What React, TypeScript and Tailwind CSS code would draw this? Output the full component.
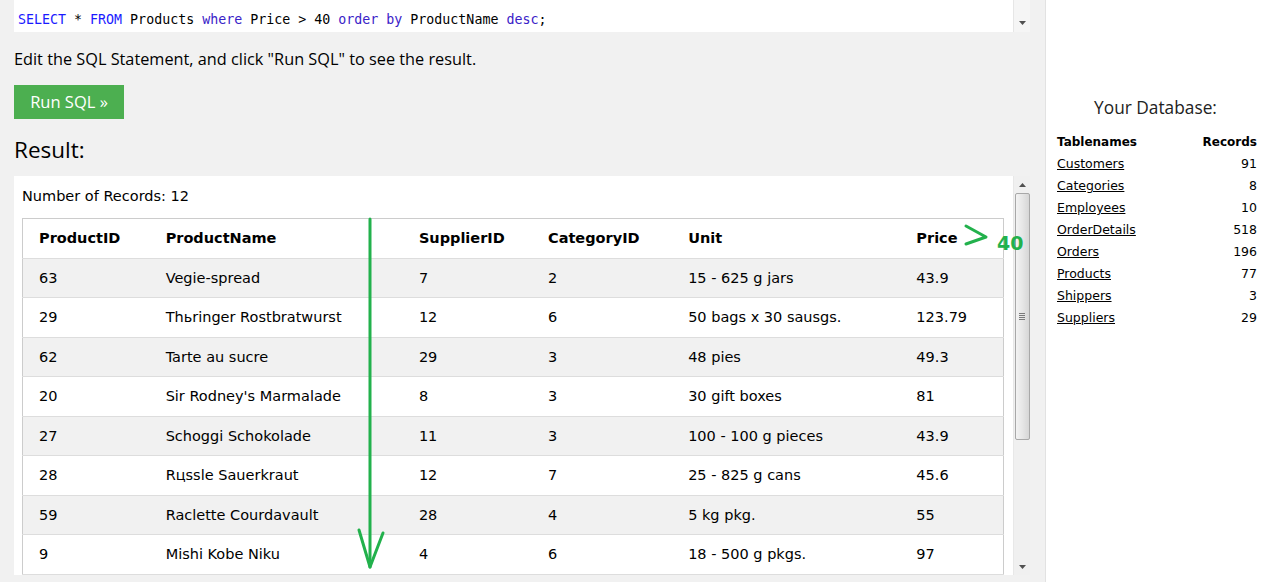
import React from "react";

const rows = [
  ["63", "Vegie-spread", "7", "2", "15 - 625 g jars", "43.9"],
  ["29", "Thьringer Rostbratwurst", "12", "6", "50 bags x 30 sausgs.", "123.79"],
  ["62", "Tarte au sucre", "29", "3", "48 pies", "49.3"],
  ["20", "Sir Rodney's Marmalade", "8", "3", "30 gift boxes", "81"],
  ["27", "Schoggi Schokolade", "11", "3", "100 - 100 g pieces", "43.9"],
  ["28", "Rцssle Sauerkraut", "12", "7", "25 - 825 g cans", "45.6"],
  ["59", "Raclette Courdavault", "28", "4", "5 kg pkg.", "55"],
  ["9", "Mishi Kobe Niku", "4", "6", "18 - 500 g pkgs.", "97"],
];

const dbTables = [
  ["Customers", "91"],
  ["Categories", "8"],
  ["Employees", "10"],
  ["OrderDetails", "518"],
  ["Orders", "196"],
  ["Products", "77"],
  ["Shippers", "3"],
  ["Suppliers", "29"],
];

const headers = ["ProductID", "ProductName", "SupplierID", "CategoryID", "Unit", "Price"];

function ArrowUp() {
  return (
    <svg width="7" height="4" viewBox="0 0 7 4">
      <path d="M3.5 0 L7 4 L0 4 Z" fill="#505050" />
    </svg>
  );
}
function ArrowDown() {
  return (
    <svg width="7" height="4" viewBox="0 0 7 4">
      <path d="M0 0 L7 0 L3.5 4 Z" fill="#505050" />
    </svg>
  );
}

export default function App() {
  return (
    <div className="relative flex h-[582px] w-[1265px] overflow-hidden bg-white text-black">
      {/* Left column */}
      <div className="flex w-[1045px] shrink-0 flex-col bg-[#f1f1f1] pl-[14px] pr-[15px]">
        {/* Code area */}
        <div className="flex h-[32px] bg-white">
          <div
            className="flex-1 pl-[4px] pt-[11px] text-[13.3px] leading-[18px] whitespace-pre"
            style={{ fontFamily: '"DejaVu Sans Mono", "Liberation Mono", monospace' }}
          >
            <span className="text-[#1a1aff]">SELECT</span>
            <span> * </span>
            <span className="text-[#1a1aff]">FROM</span>
            <span> Products </span>
            <span className="text-[#3a22c8]">where</span>
            <span> Price &gt; 40 </span>
            <span className="text-[#3a22c8]">order by</span>
            <span> ProductName </span>
            <span className="text-[#3a22c8]">desc</span>
            <span>;</span>
          </div>
          <div className="flex w-[17px] flex-col items-center justify-end border-l border-[#e6e6e6] bg-[#f5f5f5] pb-[7px]">
            <ArrowDown />
          </div>
        </div>

        <div
          className="mt-[16px] text-[16.3px] leading-[22px]"
          style={{ fontFamily: '"Open Sans", "Noto Sans", sans-serif' }}
        >
          Edit the SQL Statement, and click "Run SQL" to see the result.
        </div>

        <div className="mt-[15px]">
          <button
            className="flex h-[34px] w-[110px] items-center justify-center bg-[#4CAF50] text-[16.5px] text-white"
            style={{ fontFamily: '"Open Sans", "Noto Sans", sans-serif' }}
          >
            Run SQL »
          </button>
        </div>

        <div
          className="mt-[15px] h-[32px] text-[22.5px] leading-[32px]"
          style={{ fontFamily: '"Open Sans", "Noto Sans", sans-serif' }}
        >
          Result:
        </div>

        {/* Result panel */}
        <div className="mt-[10px] flex h-[399px] shrink-0 bg-white">
          <div
            className="flex-1 overflow-hidden pl-[8px]"
            style={{ fontFamily: '"DejaVu Sans", Verdana, sans-serif' }}
          >
            <div className="pt-[9px] text-[14.5px] leading-[22px]">Number of Records: 12</div>
            <table className="mt-[11px] w-[982px] table-fixed border-collapse border border-[#cccccc] text-[14.5px] leading-[22.5px]">
              <colgroup>
                <col className="w-[135px]" />
                <col className="w-[253px]" />
                <col className="w-[129px]" />
                <col className="w-[140px]" />
                <col className="w-[228px]" />
                <col className="w-[95px]" />
              </colgroup>
              <thead>
                <tr className="border-b border-[#dddddd] bg-white">
                  {headers.map((h, i) => (
                    <th
                      key={h}
                      className={`py-[8px] pr-[8px] text-left font-bold ${i === 0 ? "pl-[16px]" : "pl-[8px]"}`}
                    >
                      {h}
                    </th>
                  ))}
                </tr>
              </thead>
              <tbody>
                {rows.map((r, ri) => (
                  <tr
                    key={ri}
                    className={`border-b border-[#dddddd] ${ri % 2 === 0 ? "bg-[#f1f1f1]" : "bg-white"}`}
                  >
                    {r.map((c, ci) => (
                      <td
                        key={ci}
                        className={`whitespace-nowrap py-[8px] pr-[8px] ${ci === 0 ? "pl-[16px]" : "pl-[8px]"}`}
                      >
                        {c}
                      </td>
                    ))}
                  </tr>
                ))}
              </tbody>
            </table>
          </div>
          {/* Scrollbar */}
          <div className="flex w-[17px] shrink-0 flex-col items-center border-l border-[#e8e8e8] bg-[#f0f0f0]">
            <div className="flex h-[17px] items-center justify-center">
              <ArrowUp />
            </div>
            <div className="flex h-[247px] w-[15px] items-center justify-center rounded-[2px] border border-[#a8a8a8] bg-gradient-to-r from-[#f3f3f3] via-[#e6e6e6] to-[#d6d6d6]">
              <div className="flex flex-col gap-[1px]">
                <div className="h-[1px] w-[6px] bg-[#7a7a7a]" />
                <div className="h-[1px] w-[6px] bg-[#7a7a7a]" />
                <div className="h-[1px] w-[6px] bg-[#7a7a7a]" />
                <div className="h-[1px] w-[6px] bg-[#7a7a7a]" />
              </div>
            </div>
            <div className="flex-1" />
            <div className="flex h-[17px] items-center justify-center">
              <ArrowDown />
            </div>
          </div>
        </div>
      </div>

      {/* Sidebar */}
      <div
        className="flex-1 border-l border-[#e2e2e2] bg-white pt-[96px]"
        style={{ fontFamily: '"DejaVu Sans", Verdana, sans-serif' }}
      >
        <div
          className="text-center text-[17.3px] leading-[24px] text-[#222]"
          style={{ fontFamily: '"Open Sans", "Noto Sans", sans-serif' }}
        >
          Your Database:
        </div>
        <table className="ml-[11px] mt-[11px] w-[200px] text-[12.5px] leading-[22px]">
          <thead>
            <tr>
              <th className="p-0 text-left text-[12px] font-bold">Tablenames</th>
              <th className="p-0 text-right text-[12px] font-bold">Records</th>
            </tr>
          </thead>
          <tbody>
            {dbTables.map(([n, c]) => (
              <tr key={n}>
                <td className="p-0">
                  <span className="underline">{n}</span>
                </td>
                <td className="p-0 text-right">{c}</td>
              </tr>
            ))}
          </tbody>
        </table>
      </div>

      {/* Annotations */}
      <svg
        className="pointer-events-none absolute left-0 top-0"
        width="1265"
        height="582"
        viewBox="0 0 1265 582"
      >
        <g stroke="#22b14c" strokeWidth="3" fill="none" strokeLinecap="round" strokeLinejoin="round">
          <line x1="370" y1="219" x2="370" y2="567" />
          <polyline points="359,530 370,567 383,533" />
          <polyline points="966,226 986,237 966,244" />
        </g>
      </svg>
      <span
        className="pointer-events-none absolute left-[997px] top-[230px] text-[19px] font-bold leading-[26px] text-[#22b14c]"
        style={{ fontFamily: '"DejaVu Sans", Verdana, sans-serif' }}
      >
        40
      </span>
    </div>
  );
}
